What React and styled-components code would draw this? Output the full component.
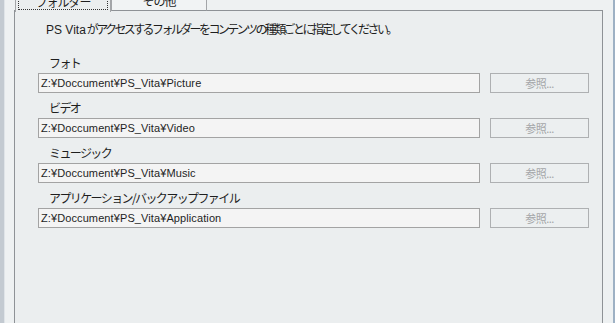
import styled, { createGlobalStyle } from "styled-components";

const GlobalStyle = createGlobalStyle`
  html, body {
    margin: 0;
    padding: 0;
    overflow: hidden;
    background: #ebeeef;
  }
`;

const folders = [
  { label: "フォト", path: "Z:¥Doccument¥PS_Vita¥Picture" },
  { label: "ビデオ", path: "Z:¥Doccument¥PS_Vita¥Video" },
  { label: "ミュージック", path: "Z:¥Doccument¥PS_Vita¥Music" },
  { label: "アプリケーション/バックアップファイル", path: "Z:¥Doccument¥PS_Vita¥Application" },
];

export default function App() {
  return (
    <Window>
      <GlobalStyle />
      <LeftEdge />
      <Body>
        <TabStrip>
          <Tab active>
            <Focus>フォルダー</Focus>
          </Tab>
          <Tab>その他</Tab>
        </TabStrip>
        <Panel>
          <Intro>
            <Latin>PS Vita</Latin>がアクセスするフォルダーをコンテンツの種類ごとに指定してください。
          </Intro>
          {folders.map((f) => (
            <Field key={f.label}>
              <Label>{f.label}</Label>
              <Row>
                <PathBox>{f.path}</PathBox>
                <BrowseButton disabled>参照...</BrowseButton>
              </Row>
            </Field>
          ))}
        </Panel>
      </Body>
      <RightEdge />
    </Window>
  );
}

const Window = styled.div`
  display: flex;
  width: 615px;
  height: 323px;
  overflow: hidden;
  font-family: "Noto Sans CJK JP", "Liberation Sans", sans-serif;
  color: #1e1e1e;
`;

const LeftEdge = styled.div`
  width: 4px;
  flex-shrink: 0;
  background: #c3cad1;
  border-right: 1px solid #dfe4e8;
`;

const RightEdge = styled.div`
  width: 2px;
  flex-shrink: 0;
  background: #9eb1c4;
`;

const Body = styled.div`
  flex: 1;
  display: flex;
  flex-direction: column;
  padding: 0 10px 0 9px;
  background: #eef1f2;
`;

const TabStrip = styled.div`
  display: flex;
  height: 21px;
  margin-top: -10px;
  position: relative;
  z-index: 1;
`;

const Tab = styled.div`
  box-sizing: border-box;
  width: 96px;
  height: ${(p) => (p.active ? "22px" : "21px")};
  margin-left: ${(p) => (p.active ? "1px" : "0")};
  border: 1px solid #a3a5a8;
  border-bottom: ${(p) => (p.active ? "none" : "1px solid #8e9296")};
  background: ${(p) => (p.active ? "#ebeeef" : "#f1f3f4")};
  display: flex;
  align-items: center;
  justify-content: center;
  padding: 2px;
  font-size: 12px;
  letter-spacing: -1px;
  line-height: 14px;
`;

const Focus = styled.div`
  flex: 1;
  align-self: stretch;
  display: flex;
  align-items: center;
  justify-content: center;
  border: 1px dotted #333;
`;

const Panel = styled.div`
  flex: 1;
  margin-top: -1px;
  border: 1px solid #8e9296;
  border-bottom: none;
  background: #ebeeef;
  padding: 10px 0 0 23px;
`;

const Intro = styled.div`
  font-size: 12px;
  line-height: 16px;
  letter-spacing: -2.6px;
  padding-left: 8px;
  margin-bottom: 18px;
`;

const Latin = styled.span`
  font-family: "Liberation Sans", sans-serif;
  letter-spacing: 0;
  margin-right: 1px;
`;

const Field = styled.div`
  display: flex;
  flex-direction: column;
  margin-bottom: 8px;
`;

const Label = styled.div`
  font-size: 12px;
  line-height: 14px;
  letter-spacing: -1.6px;
  padding-left: 11px;
  margin-bottom: 3px;
`;

const Row = styled.div`
  display: flex;
  gap: 10px;
`;

const PathBox = styled.div`
  box-sizing: border-box;
  width: 442px;
  height: 20px;
  border: 1px solid #a3a3a3;
  background: #f4f4f4;
  padding: 0 2px;
  font-family: "Liberation Sans", sans-serif;
  font-size: 11px;
  letter-spacing: 0.1px;
  line-height: 18px;
`;

const BrowseButton = styled.button`
  box-sizing: border-box;
  width: 99px;
  height: 20px;
  border: 1px solid #aeb0b2;
  background: #eceff0;
  color: #a4a6a8;
  font-family: "Noto Sans CJK JP", sans-serif;
  font-size: 11px;
  padding: 0;
  letter-spacing: -0.5px;
`;
